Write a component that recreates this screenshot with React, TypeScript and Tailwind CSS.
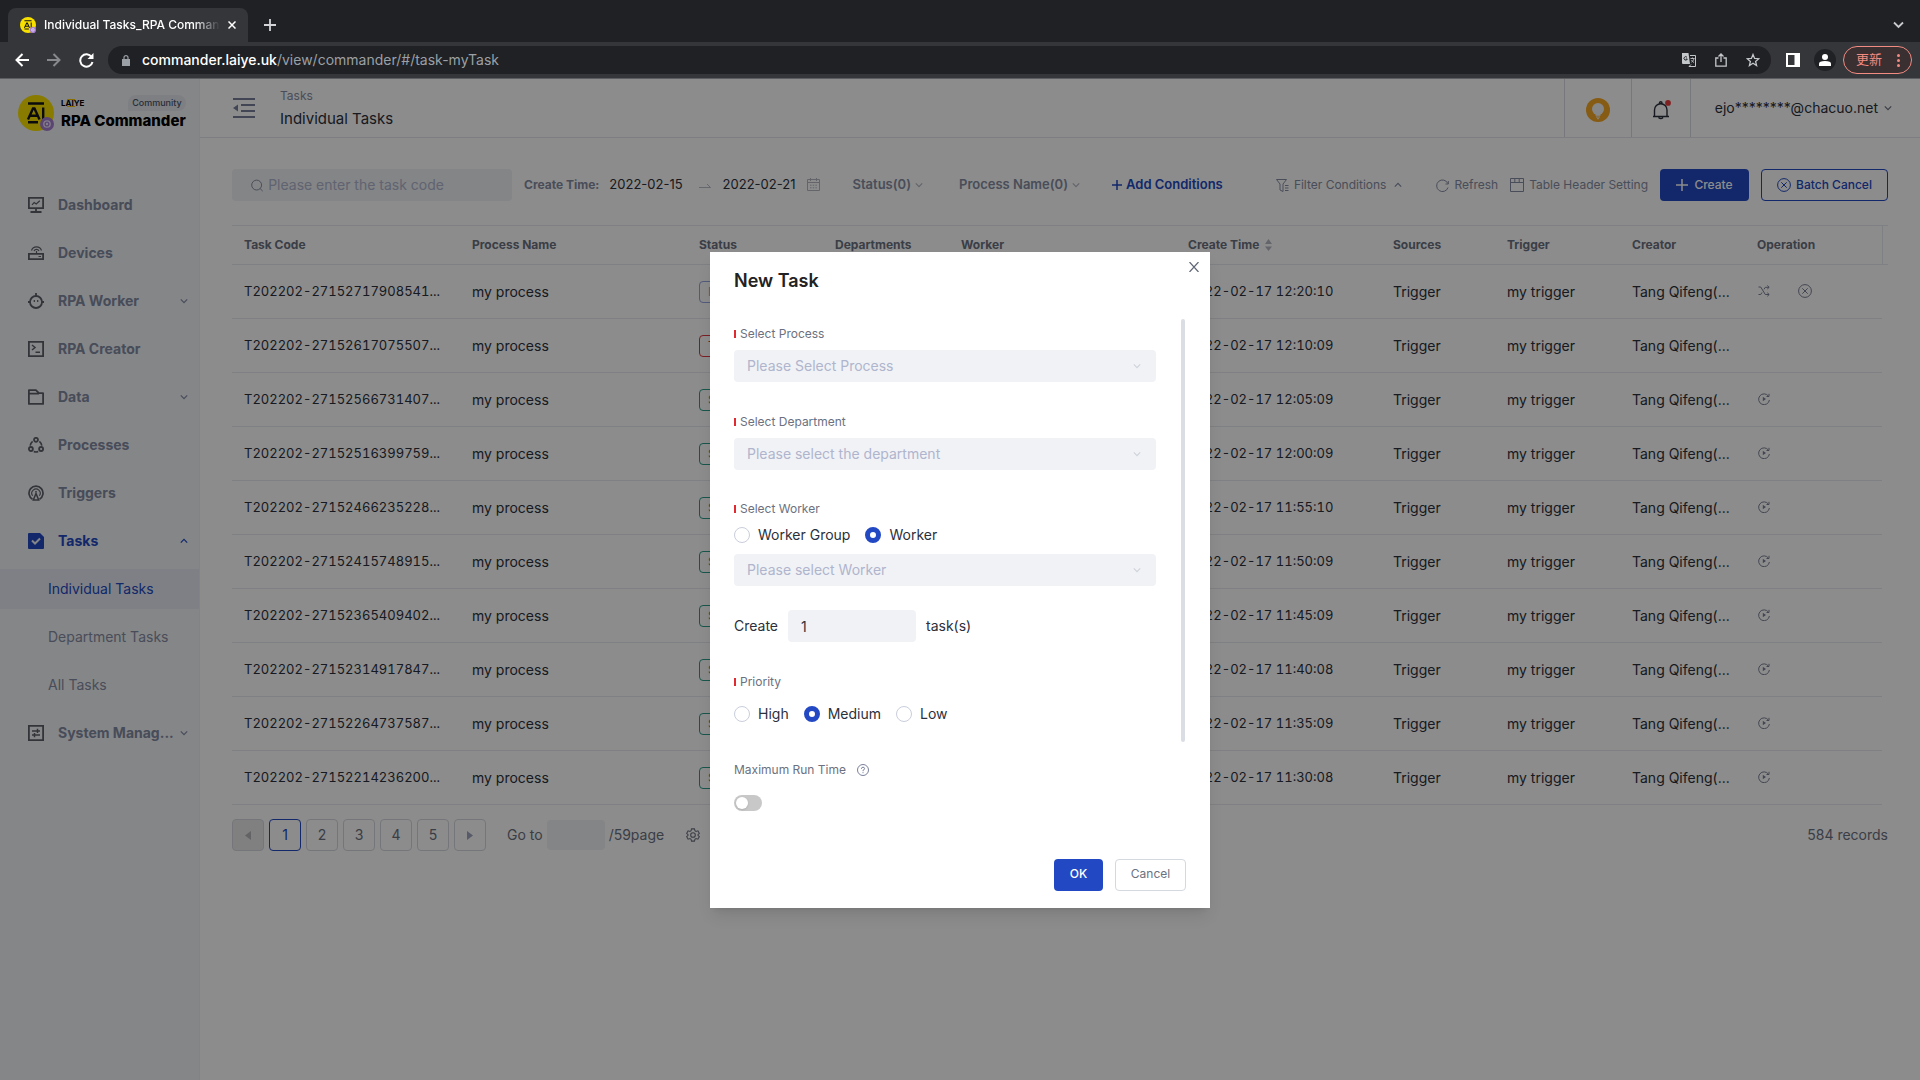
import React, { useState } from "react";

type IconProps = { className?: string };

const Chevron = ({ className = "", up = false }: IconProps & { up?: boolean }) => (
  <svg className={className} width="8" height="8" viewBox="0 0 8 8" fill="none" stroke="currentColor" strokeWidth="1.2" aria-hidden="true">
    {up ? <path d="M.8 5.6 4 2.4l3.2 3.2" /> : <path d="M.8 2.4 4 5.6l3.2-3.2" />}
  </svg>
);

const NavSvg = ({ children }: { children: React.ReactNode }) => (
  <svg width="16" height="16" viewBox="0 0 16 16" fill="none" stroke="#5c6068" strokeWidth="1.8" className="shrink-0" aria-hidden="true">
    {children}
  </svg>
);

const DashboardIcon = () => (
  <NavSvg>
    <path d="M.9.9h14.2v10.2H.9zM8 11v3.5M2.5 15h11" />
    <path d="M4 7.8 6.2 5.600l2 1.400L11.800 3.800" strokeWidth="1.2" />
  </NavSvg>
);
const DevicesIcon = () => (
  <NavSvg>
    <path d="M.9 8.900h14.200v5.200H.9z" />
    <path d="M10.500 11.500h2.500M8.500 9V6" strokeWidth="1.200" />
    <path d="M3.500 5.500a5.300 5.300 0 0 1 10 0M6 6a2.800 2.800 0 0 1 5 0" strokeWidth="1.200" />
  </NavSvg>
);
const WorkerIcon = () => (
  <NavSvg>
    <circle cx="8" cy="9" r="6" />
    <path d="M8 0v3M0 9h2M14 9h2" />
    <path d="M6.300 7v2M9.700 7v2" strokeWidth="1.200" />
  </NavSvg>
);
const CreatorIcon = () => (
  <NavSvg>
    <path d="M.9.9h14.200v14.200H.9z" />
    <path d="m4 4 3 2.500L4 9M7.500 11.300H12" strokeWidth="1.500" />
  </NavSvg>
);
const DataIcon = () => (
  <NavSvg>
    <path d="M.9 14.900V1.200h7l3 3h4.200v10.700zM1 4.600h10" strokeLinejoin="round" />
  </NavSvg>
);
const ProcessesIcon = () => (
  <NavSvg>
    <circle cx="8" cy="2.800" r="2" />
    <circle cx="2.900" cy="12" r="2" />
    <circle cx="13.100" cy="12" r="2" />
    <path d="M4.600 4.300Q2.600 6 2.200 8.600M11.400 4.300q2 1.700 2.400 4.300M5.800 14.600q2.200.9 4.400 0" strokeWidth="1.600" />
  </NavSvg>
);
const TriggersIcon = () => (
  <NavSvg>
    <path d="M4.500 14.200a7 7 0 1 1 7 0" strokeWidth="1.700" />
    <path d="M4.600 10.800a4.200 4.200 0 1 1 6.800 0" strokeWidth="1.100" />
    <path d="M8 8.500 5.300 15h5.400z" strokeWidth="1.500" />
    <path d="M7 7a1.500 1.500 0 0 1 2 0" strokeWidth="1" />
  </NavSvg>
);
const TasksIcon = () => (
  <svg width="16" height="16" viewBox="0 0 16 16" className="shrink-0" aria-hidden="true">
    <path d="M1 0h11l4 4v11a1 1 0 0 1-1 1H1a1 1 0 0 1-1-1V1a1 1 0 0 1 1-1z" fill="#2249c3" />
    <path d="m4 7.500 3 3 5-5" fill="none" stroke="#f3f4f8" strokeWidth="2" />
  </svg>
);
const SystemIcon = () => (
  <NavSvg>
    <path d="M.9.9h14.200v14.200H.9z" />
    <path d="M4 6h8M9.500 3.800V8M4 10h8M6.500 8v4.200" strokeWidth="1.500" />
  </NavSvg>
);

const CancelCircle = ({ size = 14 }: { size?: number }) => (
  <svg width={size} height={size} viewBox="0 0 14 14" fill="none" stroke="currentColor" strokeWidth="1" aria-hidden="true">
    <circle cx="7" cy="7" r="6.400" />
    <path d="m4.300 4.300 5.400 5.400M9.700 4.300 4.300 9.700" />
  </svg>
);

const ShuffleIcon = () => (
  <svg width="12" height="12" viewBox="0 0 12 12" fill="none" stroke="currentColor" strokeWidth="1" aria-hidden="true">
    <path d="M.5 2h2.200l4.600 7.500H11M.5 9.500h2.200L4 7.500M6 4.300l1.300-2H11M9.300.5 11.200 2.300 9.300 4M9.300 7.800l1.900 1.700-1.900 1.800" />
  </svg>
);
const RerunIcon = () => (
  <svg width="12" height="12" viewBox="0 0 12 12" fill="none" stroke="currentColor" strokeWidth="1" aria-hidden="true">
    <path d="M10.500 3.200A5.400 5.400 0 1 0 11.400 7M11 .8v2.700H8.500" />
    <path d="M4.800 3.800 8 6 4.800 8.200z" fill="currentColor" stroke="none" />
  </svg>
);

const Logo = ({ size }: { size: number }) => (
  <svg width={size} height={size} viewBox="0 0 36 36" className="shrink-0" aria-hidden="true">
    <circle cx="18" cy="18" r="18" fill="#f7e000" />
    <g fill="none" stroke="#15151a" strokeWidth="2.400">
      <path d="M10 8.500h16M10 27.200h10" />
      <path d="m10 24.500 5-11h1.500l5 11M12 20.800h7.500M25.200 12.500v12" />
    </g>
    <circle cx="29" cy="29" r="7" fill="#a67fd0" />
    <circle cx="29" cy="29" r="3.200" fill="none" stroke="#f0e6fa" strokeWidth="1.300" />
    <circle cx="29" cy="29" r="1.200" fill="#f0e6fa" />
  </svg>
);

function BrowserChrome() {
  return (
    <header className="shrink-0 bg-[#202124] text-white">
      <div className="flex h-[42px] items-end pl-2 pr-4">
        <div className="flex h-[34px] w-60 items-center rounded-t-lg bg-[#35363a] px-3">
          <Logo size={16} />
          <span className="ml-2 mask-r-from-85% flex-1 overflow-hidden whitespace-nowrap text-xs font-medium">
            Individual Tasks_RPA Commander
          </span>
          <button aria-label="Close tab" className="ml-2">
            <svg width="8" height="8" viewBox="0 0 8 8" stroke="#fff" strokeWidth="1.500"><path d="m.5.5 7 7M7.500.5l-7 7" /></svg>
          </button>
        </div>
        <button aria-label="New tab" className="ml-4 flex h-[34px] items-center">
          <svg width="12" height="12" viewBox="0 0 12 12" stroke="#d2d4d7" strokeWidth="1.800"><path d="M6 0v12M0 6h12" /></svg>
        </button>
        <button aria-label="Search tabs" className="ml-auto flex h-[34px] items-center">
          <svg width="11" height="8" viewBox="0 0 11 8" fill="none" stroke="#c8cacd" strokeWidth="1.800"><path d="m1 1.500 4.500 4.500L10 1.500" /></svg>
        </button>
      </div>
      <div className="flex h-9 items-center bg-[#35363a] pl-[15px] pr-2">
        <button aria-label="Back">
          <svg width="14" height="14" viewBox="0 0 14 14" fill="none" stroke="#fff" strokeWidth="2"><path d="M14 7H1.500M7.500 1l-6 6 6 6" /></svg>
        </button>
        <button aria-label="Forward" className="ml-[18px]">
          <svg width="14" height="14" viewBox="0 0 14 14" fill="none" stroke="#87898c" strokeWidth="2"><path d="M0 7h12.500M6.500 1l6 6-6 6" /></svg>
        </button>
        <button aria-label="Reload" className="ml-[18px]">
          <svg width="15" height="15" viewBox="0 0 15 15" fill="none" stroke="#fff" strokeWidth="2"><path d="M12.600 4A6.200 6.200 0 1 0 13.500 9" /><path d="M14.500 0v6h-6z" fill="#fff" stroke="none" /></svg>
        </button>
        <div className="ml-[14px] flex h-7 flex-1 items-center rounded-full bg-[#202124] pl-[14px] pr-[11px]">
          <svg width="8" height="11" viewBox="0 0 8 11" className="shrink-0" aria-hidden="true"><path d="M0 4h8v7H0z" fill="#9aa0a6" /><path d="M2 4.500V2.600a2 2 0 0 1 4 0v1.900" fill="none" stroke="#9aa0a6" strokeWidth="1.200" /></svg>
          <span className="ml-3 flex-1 text-sm font-medium">
            commander.laiye.uk<span className="font-normal text-[#9aa0a6]">/view/commander/#/task-myTask</span>
          </span>
          <button aria-label="Translate">
            <svg width="14" height="14" viewBox="0 0 14 14" fill="none"><path d="M0 0h6.500l1.500 11H1a1 1 0 0 1-1-1z" fill="#c4c7ca" /><path d="M8 2.500h5.500v11H7l2-2" stroke="#c4c7ca" /><path d="M5 4.300a1.700 1.700 0 1 0 .3 1.700H3.800" stroke="#202124" /><path d="M8.500 5.500h4M10.500 4.500v1M12 5.500c-.5 2-1.500 3-2.500 3.700M9.500 7c.5 1.200 1.500 2 2.500 2.500" stroke="#c4c7ca" strokeWidth=".9" /></svg>
          </button>
          <button aria-label="Share" className="ml-[19px]">
            <svg width="12" height="14" viewBox="0 0 12 14" fill="none" stroke="#c4c7ca" strokeWidth="1.300"><path d="M3.500 5H.8v8.200h10.400V5H8.500M6 9V1.200M3.500 3.500 6 1l2.500 2.500" /></svg>
          </button>
          <button aria-label="Bookmark" className="ml-[19px]">
            <svg width="14" height="14" viewBox="0 0 14 14" fill="none" stroke="#c4c7ca" strokeWidth="1.300"><path d="m7 1.500 1.600 3.900 4.200.3-3.200 2.700 1 4.100L7 10.300l-3.600 2.200 1-4.100L1.200 5.700l4.200-.3z" /></svg>
          </button>
        </div>
        <button aria-label="Side panel" className="ml-[15px]">
          <svg width="14" height="14" viewBox="0 0 14 14"><path d="M0 0h14v14H0z" fill="#fff" /><path d="M2 2h6.500v10H2z" fill="#35363a" /></svg>
        </button>
        <button aria-label="Profile" className="ml-[14px] flex size-[22px] items-center justify-center rounded-full bg-[#202124]">
          <svg width="12" height="12" viewBox="0 0 12 12" fill="#fff"><circle cx="6" cy="3" r="3" /><path d="M0 12V9.500Q0 7 6 7t6 2.500V12z" /></svg>
        </button>
        <button className="ml-[7px] flex h-7 w-[69px] items-center justify-between rounded-full border border-[#f28b82] bg-[#3a2f31] pl-3 pr-[11px] text-[13px] text-[#f28b82] [font-family:Inter,'Noto_Sans_CJK_SC',sans-serif]">
          更新
          <svg width="3" height="13" viewBox="0 0 3 13" fill="currentColor" aria-hidden="true"><circle cx="1.500" cy="1.500" r="1.500" /><circle cx="1.500" cy="6.500" r="1.500" /><circle cx="1.500" cy="11.500" r="1.500" /></svg>
        </button>
      </div>
      <div className="h-px bg-[#5b5d61]" />
    </header>
  );
}

const nav = [
  { label: "Dashboard", icon: <DashboardIcon /> },
  { label: "Devices", icon: <DevicesIcon /> },
  { label: "RPA Worker", icon: <WorkerIcon />, expandable: true },
  { label: "RPA Creator", icon: <CreatorIcon /> },
  { label: "Data", icon: <DataIcon />, expandable: true },
  { label: "Processes", icon: <ProcessesIcon /> },
  { label: "Triggers", icon: <TriggersIcon /> },
];

function NavRow({ label, icon, expandable }: { label: string; icon: React.ReactNode; expandable?: boolean }) {
  return (
    <a href="#" className="flex h-10 items-center whitespace-nowrap pl-7 pr-[11px] text-sm font-bold text-[#828aa2]">
      {icon}
      <span className="ml-[14px] flex-1">{label}</span>
      {expandable && <Chevron className="shrink-0" />}
    </a>
  );
}

function Sidebar() {
  return (
    <aside className="w-[200px] shrink-0 border-r border-[#eceef2] bg-[#f3f4f8]">
      <div className="flex h-[106px] items-start pl-[18px] pr-4 pt-4">
        <Logo size={36} />
        <div className="ml-[7px] flex-1">
          <div className="flex items-center justify-between">
            <span className="relative text-[8px] font-bold leading-4 text-black">
              LAIYE
              <span className="absolute left-[6px] top-1 h-px w-2 bg-[#f7c500]" />
              <span className="absolute bottom-1 left-[6px] h-px w-2 bg-[#f7c500]" />
            </span>
            <span className="rounded-full rounded-bl-none bg-[#e4e8ef] px-1 text-[9px] font-medium leading-4 text-[#4c5468]">Community</span>
          </div>
          <div className="whitespace-nowrap text-[15px] font-extrabold leading-5 text-black">RPA Commander</div>
        </div>
      </div>
      <nav className="flex flex-col gap-2">
        {nav.map((n) => (
          <NavRow key={n.label} {...n} />
        ))}
        <a href="#" className="flex h-10 items-center pl-7 pr-[11px] text-sm font-bold text-[#2249c3]">
          <TasksIcon />
          <span className="ml-[14px] flex-1">Tasks</span>
          <Chevron up />
        </a>
        <a href="#" className="flex h-10 items-center bg-[#e6e9f3] pl-12 text-sm text-[#2249c3]">Individual Tasks</a>
        <a href="#" className="flex h-10 items-center pl-12 text-sm text-[#868da3]">Department Tasks</a>
        <a href="#" className="flex h-10 items-center pl-12 text-sm text-[#868da3]">All Tasks</a>
        <NavRow label="System Manag..." icon={<SystemIcon />} expandable />
      </nav>
    </aside>
  );
}

function TopBar() {
  return (
    <div className="flex h-[59px] shrink-0 items-stretch border-b border-[#e4e6eb] pl-[33px]">
      <button aria-label="Collapse menu">
        <svg width="22" height="20" viewBox="0 0 22 20" fill="none" stroke="#79809a" strokeWidth="2"><path d="M0 1h22M8 7h14M8 13h14M0 19h22" /><path d="M5 6.500v7L0 10z" fill="#79809a" stroke="none" /></svg>
      </button>
      <div className="ml-[25px] pt-2">
        <div className="text-xs leading-[18px] text-[#868da3]">Tasks</div>
        <h1 className="text-[15px] leading-7 text-[#2b303b]">Individual Tasks</h1>
      </div>
      <button aria-label="Tips" className="ml-auto flex w-[67px] items-center justify-center border-l border-[#d8dae0] pt-1">
        <svg width="24" height="24" viewBox="0 0 24 24"><circle cx="12" cy="12" r="12" fill="#f5a623" /><circle cx="12" cy="11" r="6" fill="#f3f4f8" /><path d="M9.500 16h5v1.800h-5z" fill="#f3f4f8" /><path d="M10 19h4M11 20.700h2" stroke="#f3f4f8" /></svg>
      </button>
      <button aria-label="Notifications" className="flex w-[59px] items-center justify-center border-l border-[#d8dae0] pt-1">
        <svg width="20" height="20" viewBox="0 0 20 20" fill="none" stroke="#2b303b" strokeWidth="1.400"><path d="M2 16.500h16M3.500 16.500V10a6 6 0 0 1 12.500 0v6.500M8.500 3.500V3a1.200 1.200 0 0 1 2.500 0v.5M7.500 17.500q2.300 2.200 4.600 0" /><circle cx="17" cy="2.900" r="2.900" fill="#ea3d3d" stroke="none" /></svg>
      </button>
      <button className="flex items-center border-l border-[#d8dae0] pl-6 pr-7 text-sm text-[#2b303b]">
        ejo********@chacuo.net
        <Chevron className="ml-[6px] text-[#6b7180]" />
      </button>
    </div>
  );
}

function Toolbar() {
  return (
    <div className="flex h-8 items-center whitespace-nowrap text-xs text-[#868da3]">
      <label className="flex h-8 w-[280px] items-center rounded-sm bg-[#f1f2f6] pl-[19px]">
        <svg width="13" height="13" viewBox="0 0 14 14" fill="none" stroke="#7a8095" aria-hidden="true"><circle cx="6.500" cy="6.500" r="5.700" /><path d="m10.500 10.500 3 3" /></svg>
        <input aria-label="Task code" placeholder="Please enter the task code" className="ml-[5px] w-full bg-transparent text-sm outline-none placeholder:text-[#afb5cd]" />
      </label>
      <span className="ml-3 font-bold">Create Time:</span>
      <button className="ml-[10px] flex items-center text-[13px] text-[#2b303b]">
        2022-02-15
        <svg className="ml-4" width="12" height="6" viewBox="0 0 12 6" fill="none" stroke="#b8bcc8" aria-hidden="true"><path d="M0 5.500h11.500L8 2" /></svg>
        <span className="ml-3">2022-02-21</span>
        <svg className="ml-3" width="13" height="13" viewBox="0 0 13 13" fill="none" stroke="#b4b8c4" aria-hidden="true"><path d="M.5 1.500h12v11H.5zM.5 4.500h12M3.500 0v3M9.500 0v3" /><path d="M3 7.200h7.500M3 9.800h7.500" strokeDasharray="1.500 1.200" /></svg>
      </button>
      <button className="ml-8 flex items-center text-[13px] font-semibold">
        Status(0) <Chevron className="ml-1 text-[#b4b8c4]" />
      </button>
      <button className="ml-9 flex items-center text-[13px] font-semibold">
        Process Name(0) <Chevron className="ml-1 text-[#b4b8c4]" />
      </button>
      <button className="ml-8 flex items-center text-[13px] font-semibold text-[#2249c3]">
        <svg width="10" height="10" viewBox="0 0 10 10" stroke="currentColor" strokeWidth="1.500" className="mr-1" aria-hidden="true"><path d="M5 0v10M0 5h10" /></svg>
        Add Conditions
      </button>
      <div className="ml-auto flex items-center">
        <button className="flex items-center">
          <svg width="13" height="13" viewBox="0 0 13 13" fill="none" stroke="currentColor" aria-hidden="true"><path d="M.5.5h10L7 5v7.500L4 11V5zM9 6.500h3.500M9 9h3.500M9 11.500h3.500" /></svg>
          <span className="ml-[5px]">Filter Conditions</span>
          <Chevron up className="ml-2" />
        </button>
        <button className="ml-[34px] flex items-center">
          <svg width="13" height="13" viewBox="0 0 13 13" fill="none" stroke="currentColor" aria-hidden="true"><path d="M11.800 4.500A5.800 5.800 0 1 0 12 8.500M12.300 2v3H9.500" /></svg>
          <span className="ml-[5px]">Refresh</span>
        </button>
        <button className="ml-3 flex items-center">
          <svg width="14" height="14" viewBox="0 0 14 14" fill="none" stroke="currentColor" aria-hidden="true"><path d="M.5.500h13v13H.5zM.5 4.500h13M4.800.5v4M9.200.5v4" /></svg>
          <span className="ml-[5px]">Table Header Setting</span>
        </button>
        <button className="ml-3 flex h-8 w-[89px] items-center justify-center rounded-sm bg-[#2249c3] font-medium text-white">
          <svg width="12" height="12" viewBox="0 0 12 12" stroke="currentColor" strokeWidth="1.500" className="mr-[6px]" aria-hidden="true"><path d="M6 0v12M0 6h12" /></svg>
          Create
        </button>
        <button className="ml-3 flex h-8 w-[127px] items-center justify-center gap-[5px] rounded-sm border border-[#2249c3] font-medium text-[#2249c3]">
          <CancelCircle />
          Batch Cancel
        </button>
      </div>
    </div>
  );
}

const rows = [
  { code: "T202202-27152717908541...", time: "12:20:10", status: "Pending" },
  { code: "T202202-27152617075507...", time: "12:10:09", status: "Timeout" },
  { code: "T202202-27152566731407...", time: "12:05:09", status: "Success" },
  { code: "T202202-27152516399759...", time: "12:00:09", status: "Success" },
  { code: "T202202-27152466235228...", time: "11:55:10", status: "Success" },
  { code: "T202202-27152415748915...", time: "11:50:09", status: "Success" },
  { code: "T202202-27152365409402...", time: "11:45:09", status: "Success" },
  { code: "T202202-27152314917847...", time: "11:40:08", status: "Success" },
  { code: "T202202-27152264737587...", time: "11:35:09", status: "Success" },
  { code: "T202202-27152214236200...", time: "11:30:08", status: "Success" },
];

const tagStyle: Record<string, string> = {
  Pending: "border-[#94a6e0] text-[#94a6e0]",
  Timeout: "border-[#e03a40] text-[#e03a40]",
  Success: "border-[#2a9d8a] text-[#2a9d8a]",
};

function TaskTable() {
  const th = "h-10 border-y border-[#e8eaee] pl-3 text-left text-xs font-bold text-[#6b7180]";
  const td = "h-[54px] border-b border-[#e8eaee] pl-3 whitespace-nowrap";
  return (
    <table className="mt-6 w-full table-fixed border-separate border-spacing-0 text-sm text-[#2b303b]">
      <colgroup>
        <col className="w-[228px]" />
        <col className="w-[227px]" />
        <col className="w-[136px]" />
        <col className="w-[126px]" />
        <col className="w-[227px]" />
        <col className="w-[205px]" />
        <col className="w-[114px]" />
        <col className="w-[125px]" />
        <col className="w-[125px]" />
        <col className="w-[137px]" />
        <col className="w-[6px]" />
      </colgroup>
      <thead>
        <tr>
          <th className={th}>Task Code</th>
          <th className={th}>Process Name</th>
          <th className={th}>Status</th>
          <th className={th}>Departments</th>
          <th className={th}>Worker</th>
          <th className={th}>
            <span className="flex items-center">
              Create Time
              <svg width="7" height="12" viewBox="0 0 7 12" fill="#b4b8c4" className="ml-[6px]" aria-hidden="true"><path d="M3.500 0 7 5H0zM3.500 12 0 7.500h7z" /></svg>
            </span>
          </th>
          <th className={th}>Sources</th>
          <th className={th}>Trigger</th>
          <th className={th}>Creator</th>
          <th className={th}>Operation</th>
          <td className="border-y border-l border-[#e8eaee]" />
        </tr>
      </thead>
      <tbody>
        {rows.map((r) => (
          <tr key={r.code}>
            <td className={`${td} text-[13px] tabular-nums`}>{r.code}</td>
            <td className={td}>my process</td>
            <td className={td}>
              <span className={`inline-flex h-[22px] items-center rounded border px-2 text-xs ${tagStyle[r.status]}`}>{r.status}</span>
            </td>
            <td className={td}></td>
            <td className={td}></td>
            <td className={`${td} text-[13px] tabular-nums`}>2022-02-17 {r.time}</td>
            <td className={td}>Trigger</td>
            <td className={td}>my trigger</td>
            <td className={td}>Tang Qifeng(...</td>
            <td className={td}>
              <span className="flex items-center gap-7 pb-[2px] pl-px text-[#7a8095]">
                {r.status === "Pending" && (
                  <>
                    <button aria-label="Change worker"><ShuffleIcon /></button>
                    <button aria-label="Cancel task"><CancelCircle /></button>
                  </>
                )}
                {r.status === "Success" && <button aria-label="Run again"><RerunIcon /></button>}
              </span>
            </td>
            <td />
          </tr>
        ))}
      </tbody>
    </table>
  );
}

function Pagination() {
  const btn = "flex size-8 items-center justify-center rounded border border-[#d5d8df]";
  return (
    <div className="mt-[14px] flex items-center text-sm text-[#6b7180]">
      <div className="flex gap-[5px]">
        <button aria-label="Previous page" className={`${btn} bg-[#e9e9e9]`}>
          <svg width="6" height="9" viewBox="0 0 6 9" fill="#b4b4b8"><path d="M6 0v9L0 4.500z" /></svg>
        </button>
        <button className="flex size-8 items-center justify-center rounded border border-[#2249c3] text-[#2249c3]">1</button>
        <button className={btn}>2</button>
        <button className={btn}>3</button>
        <button className={btn}>4</button>
        <button className={btn}>5</button>
        <button aria-label="Next page" className={btn}>
          <svg width="6" height="9" viewBox="0 0 6 9" fill="#9fa5bd"><path d="M0 0v9l6-4.500z" /></svg>
        </button>
      </div>
      <label className="ml-[21px] flex items-center">
        Go to
        <input className="ml-1 h-[30px] w-[58px] rounded-sm bg-[#f1f2f6] px-2 outline-none" />
      </label>
      <span className="ml-1">/59page</span>
      <button aria-label="Page settings" className="ml-[22px]">
        <svg width="14" height="14" viewBox="0 0 24 24" fill="none" stroke="currentColor" strokeWidth="1.800"><path d="M9.500 1.500h5l.8 3.200 1.900 1.100 3.200-.9 2.500 4.300-2.400 2.300v1l2.400 2.300-2.500 4.300-3.200-.9-1.900 1.100-.8 3.200h-5l-.8-3.200-1.900-1.100-3.200.9-2.500-4.300L3.500 12.500v-1L1.100 9.200l2.500-4.300 3.200.9 1.900-1.100z" /><circle cx="12" cy="12" r="4" /></svg>
      </button>
      <span className="ml-auto">584 records</span>
    </div>
  );
}

function FieldLabel({ children, htmlFor }: { children: React.ReactNode; htmlFor?: string }) {
  return (
    <label htmlFor={htmlFor} className="flex h-5 items-center text-xs text-[#6b7180]">
      <span className="mr-1 h-2 w-[2px] bg-[#e02a2f]" />
      {children}
    </label>
  );
}

function SelectBox({ id, placeholder, label }: { id: string; placeholder: string; label?: string }) {
  return (
    <div className="relative">
      <select id={id} aria-label={label} className="h-8 w-full appearance-none rounded-sm bg-[#f1f2f6] px-[13px] text-sm text-[#afb5cd] outline-none">
        <option>{placeholder}</option>
      </select>
      <Chevron className="pointer-events-none absolute right-[15px] top-3 text-[#d0d3dc]" />
    </div>
  );
}

function Radio({ name, label, checked, onSelect }: { name: string; label: string; checked: boolean; onSelect: () => void }) {
  return (
    <label className="flex items-center gap-2 text-sm text-[#2b303b]">
      <input
        type="radio"
        name={name}
        checked={checked}
        onChange={onSelect}
        className="size-4 appearance-none rounded-full border border-[#c9cedb] bg-white checked:border-[5px] checked:border-[#2249c3]"
      />
      {label}
    </label>
  );
}

function NewTaskDialog() {
  const [target, setTarget] = useState("Worker");
  const [priority, setPriority] = useState("Medium");
  return (
    <div role="dialog" aria-label="New Task" className="relative w-[500px] bg-white px-6 pb-[17px] shadow-lg">
      <button aria-label="Close" className="absolute right-[11px] top-[10px]">
        <svg width="10" height="10" viewBox="0 0 10 10" fill="none" stroke="#5f6675" strokeWidth="1.200"><path d="m.5 0 9 10M9.500 0l-9 10" /></svg>
      </button>
      <h2 className="pt-4 text-lg font-semibold leading-[26px] text-[#222]">New Task</h2>
      <div className="mt-[25px] flex items-start justify-between">
        <form className="w-[422px] pt-[5px]">
          <FieldLabel htmlFor="process">Select Process</FieldLabel>
          <div className="mt-[6px]"><SelectBox id="process" placeholder="Please Select Process" /></div>
          <div className="mt-[30px]"><FieldLabel htmlFor="department">Select Department</FieldLabel></div>
          <div className="mt-[6px]"><SelectBox id="department" placeholder="Please select the department" /></div>
          <div className="mt-[29px]"><FieldLabel htmlFor="worker">Select Worker</FieldLabel></div>
          <div className="mt-[6px] flex h-5 items-center gap-[15px]">
            {["Worker Group", "Worker"].map((o) => (
              <Radio key={o} name="target" label={o} checked={target === o} onSelect={() => setTarget(o)} />
            ))}
          </div>
          <div className="mt-[9px]"><SelectBox id="worker" placeholder="Please select Worker" /></div>
          <div className="mt-6 flex h-8 items-center text-sm text-[#2b303b]">
            <label htmlFor="count">Create</label>
            <input id="count" defaultValue="1" className="mx-[10px] h-8 w-32 rounded-sm bg-[#f1f2f6] px-[13px] outline-none" />
            task(s)
          </div>
          <div className="mt-[30px]"><FieldLabel>Priority</FieldLabel></div>
          <div className="mt-3 flex h-5 items-center gap-[15px]">
            {["High", "Medium", "Low"].map((o) => (
              <Radio key={o} name="priority" label={o} checked={priority === o} onSelect={() => setPriority(o)} />
            ))}
          </div>
          <label htmlFor="limit" className="mt-9 flex h-5 items-center text-xs text-[#6b7180]">
            Maximum Run Time
            <svg width="12" height="12" viewBox="0 0 12 12" fill="none" stroke="#79809a" className="ml-[11px]" aria-hidden="true"><circle cx="6" cy="6" r="5.500" /><path d="M4.400 4.800Q4.500 3.200 6 3.200t1.600 1.500Q7.600 5.600 6 6.300v.9M6 8.200v1" /></svg>
          </label>
          <input
            id="limit"
            type="checkbox"
            role="switch"
            className="mt-[15px] block h-4 w-7 appearance-none rounded-full bg-[#c8c8c8] before:m-[2px] before:block before:size-3 before:rounded-full before:bg-white before:shadow-sm checked:bg-[#2249c3] checked:before:ml-[14px]"
          />
        </form>
        <div className="mr-px h-[423px] w-1 rounded-full bg-[#dadde3]" />
      </div>
      <div className="mt-12 flex justify-end gap-3 text-xs font-medium">
        <button className="h-8 w-[49px] rounded-sm bg-[#2249c3] pb-[2px] text-white">OK</button>
        <button className="h-8 w-[71px] rounded-sm border border-[#d5d8df] pb-[2px] font-normal text-[#6b7180]">Cancel</button>
      </div>
    </div>
  );
}

export default function App() {
  return (
    <div className="flex h-screen flex-col overflow-hidden [font-family:Inter,sans-serif]">
      <BrowserChrome />
      <div className="relative flex min-h-0 flex-1 bg-white">
        <Sidebar />
        <main className="min-w-0 flex-1">
          <TopBar />
          <div className="px-8 pt-[31px]">
            <Toolbar />
            <TaskTable />
            <Pagination />
          </div>
        </main>
        <div className="absolute inset-0 flex items-start justify-center bg-black/45 pt-[173px]">
          <NewTaskDialog />
        </div>
      </div>
    </div>
  );
}
